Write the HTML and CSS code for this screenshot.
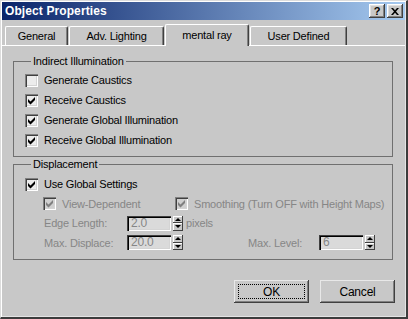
FILE: index.html
```html
<!DOCTYPE html>
<html>
<head>
<meta charset="utf-8">
<link rel="stylesheet" href="styles.css">
</head>
<body>
<div class="window">
  <div class="titlebar">
    <span class="title">Object Properties</span>
    <div class="tbtns">
      <span class="tbtn help">?</span>
      <span class="tbtn close"><svg width="8" height="7" viewBox="0 0 8 7"><path d="M0 0h2l2 2.3L6 0h2L5 3.5 8 7H6L4 4.7 2 7H0l3-3.5z" fill="#000"/></svg></span>
    </div>
  </div>
  <div class="tabs">
    <div class="tab tab-general">General</div>
    <div class="tab tab-adv">Adv. Lighting</div>
    <div class="tab tab-mr sel">mental ray</div>
    <div class="tab tab-user">User Defined</div>
  </div>
  <div class="panel">
    <fieldset class="group g1">
      <legend>Indirect Illumination</legend>
      <div class="row"><span class="cb"></span><span class="lbl">Generate Caustics</span></div>
      <div class="row"><span class="cb"><svg class="chk" viewBox="0 0 13 13"><polygon points="3,5 5.5,7.5 10,3 10,6 5.5,10.5 3,8"/></svg></span><span class="lbl">Receive Caustics</span></div>
      <div class="row"><span class="cb"><svg class="chk" viewBox="0 0 13 13"><polygon points="3,5 5.5,7.5 10,3 10,6 5.5,10.5 3,8"/></svg></span><span class="lbl">Generate Global Illumination</span></div>
      <div class="row"><span class="cb"><svg class="chk" viewBox="0 0 13 13"><polygon points="3,5 5.5,7.5 10,3 10,6 5.5,10.5 3,8"/></svg></span><span class="lbl">Receive Global Illumination</span></div>
    </fieldset>
    <fieldset class="group g2">
      <legend>Displacement</legend>
      <div class="row r1"><span class="cb"><svg class="chk" viewBox="0 0 13 13"><polygon points="3,5 5.5,7.5 10,3 10,6 5.5,10.5 3,8"/></svg></span><span class="lbl">Use Global Settings</span></div>
      <div class="row r2 sub">
        <div class="vd"><span class="cb dis"><svg class="chk" viewBox="0 0 13 13"><polygon points="3,5 5.5,7.5 10,3 10,6 5.5,10.5 3,8"/></svg></span><span class="lbl">View-Dependent</span></div>
        <span class="cb dis"><svg class="chk" viewBox="0 0 13 13"><polygon points="3,5 5.5,7.5 10,3 10,6 5.5,10.5 3,8"/></svg></span><span class="lbl">Smoothing (Turn OFF with Height Maps)</span>
      </div>
      <div class="row r3 sub2">
        <span class="flabel">Edge Length:</span>
        <span class="field">2.0</span>
        <span class="spin"><span class="up"></span><span class="dn"></span></span>
        <span class="unit">pixels</span>
      </div>
      <div class="row r4 sub2">
        <span class="flabel">Max. Displace:</span>
        <span class="field">20.0</span>
        <span class="spin"><span class="up"></span><span class="dn"></span></span>
        <span class="flabel ml">Max. Level:</span>
        <span class="field">6</span>
        <span class="spin"><span class="up"></span><span class="dn"></span></span>
      </div>
    </fieldset>
  </div>
  <div class="buttons">
    <div class="btn default"><span class="focus">OK</span></div>
    <div class="btn">Cancel</div>
  </div>
</div>
</body>
</html>
```

FILE: styles.css
```css
* { box-sizing: border-box; }
html, body { margin: 0; padding: 0; }
body {
  width: 408px;
  height: 319px;
  overflow: hidden;
  background: #c8c8c8;
  font-family: "Liberation Sans", Arial, sans-serif;
  font-size: 11px;
  letter-spacing: -0.2px;
  color: #000;
}
.window {
  width: 408px;
  height: 319px;
  background: #c8c8c8;
  border-style: solid;
  border-width: 1px 2px 2px 1px;
  border-color: #dcdcdc #3c3c3c #3c3c3c #dcdcdc;
  box-shadow: inset 1px 1px #ffffff, inset -1px -1px #e4e4e4;
  padding: 1px;
  display: flex;
  flex-direction: column;
}
.titlebar {
  height: 18px;
  flex: none;
  background: linear-gradient(to right, #0a246a, #a6caf0);
  display: flex;
  align-items: center;
  justify-content: space-between;
  padding: 0 2px 0 3px;
}
.title {
  color: #fff;
  font-weight: bold;
  font-size: 12px;
  letter-spacing: 0.1px;
}
.tbtns { display: flex; gap: 2px; }
.tbtn {
  width: 16px;
  height: 14px;
  background: #c8c8c8;
  box-shadow: inset -1px -1px #404040, inset 1px 1px #ffffff, inset -2px -2px #808080, inset 2px 2px #e0e0e0;
  display: flex;
  align-items: center;
  justify-content: center;
  font-weight: bold;
  font-size: 11px;
  line-height: 14px;
}
.tbtn.close svg { display: block; }

.tabs {
  flex: none;
  height: 26px;
  display: flex;
  align-items: flex-end;
  padding-left: 3px;
  border-bottom: 1px solid #fff;
}
.tab {
  height: 19px;
  border-top: 1px solid #fff;
  border-left: 1px solid #fff;
  border-right: 1px solid #404040;
  border-radius: 2px 2px 0 0;
  box-shadow: inset -1px 0 #808080;
  display: flex;
  align-items: center;
  justify-content: center;
  padding-bottom: 1px;
}
.tab-general { width: 63px; }
.tab-adv { width: 95px; margin-left: 1px; }
.tab-mr { width: 84px; margin-left: 1px; }
.tab-user { width: 97px; margin-left: 1px; }
.tab.sel {
  height: 22px;
  margin-bottom: -1px;
  background: #c8c8c8;
  position: relative;
  z-index: 1;
  padding-bottom: 2px;
}

.panel {
  flex: none;
  padding-left: 11px;
}
.group {
  width: 380px;
  margin: 0;
  border: 1px solid #707070;
  padding: 2px 0 6px 11px;
  min-width: 0;
}
.group legend {
  padding: 0 2px;
  margin-left: 6px;
  line-height: 13px;
}
.g1 { margin-top: 9px; }
.g2 { margin-top: 1px; padding-top: 3px; padding-bottom: 7px; }

.row {
  display: flex;
  align-items: center;
  height: 20px;
}
.r2 { height: 19px; }
.r4 { height: 19px; }
.cb {
  width: 13px;
  height: 13px;
  flex: none;
  background: #ececec;
  box-shadow: inset 1px 1px #808080, inset 2px 2px #404040, inset -1px -1px #ffffff, inset -2px -2px #d4d4d4;
  margin-right: 6px;
}
.cb .chk { display: block; width: 13px; height: 13px; fill: #000; }
.cb.dis { background: #d0d0d0; }
.cb.dis .chk { fill: #808080; }
.sub { padding-left: 18px; color: #868686; }
.sub .lbl { color: #868686; }
.vd { width: 132px; display: flex; align-items: center; }
.sub2 { padding-left: 19px; color: #868686; }
.flabel { width: 83px; flex: none; }
.flabel.ml { width: 71px; margin-left: 65px; }
.field {
  width: 44px;
  height: 15px;
  flex: none;
  background: #dadada;
  box-shadow: inset 1px 1px #404040, inset 2px 2px #000000, inset -1px -1px #ffffff, inset -2px -2px #d4d4d4;
  padding: 0 0 0 4px;
  line-height: 15px;
  font-size: 12px;
  color: #868686;
}
.spin {
  width: 10px;
  height: 15px;
  flex: none;
  margin-left: 2px;
  display: flex;
  flex-direction: column;
}
.spin span {
  flex: 1;
  background: #c8c8c8;
  box-shadow: inset -1px -1px #404040, inset 1px 1px #ffffff;
  display: flex;
  align-items: center;
  justify-content: center;
}
.spin .up::before {
  content: "";
  border-left: 3px solid transparent;
  border-right: 3px solid transparent;
  border-bottom: 3px solid #000;
  margin-right: 1px;
}
.spin .dn::before {
  content: "";
  border-left: 3px solid transparent;
  border-right: 3px solid transparent;
  border-top: 3px solid #000;
  margin-right: 1px;
}
.unit { margin-left: 3px; }

.buttons {
  flex: none;
  display: flex;
  justify-content: flex-end;
  gap: 11px;
  margin-top: 20px;
  padding-right: 10px;
}
.btn {
  width: 75px;
  height: 23px;
  background: #c8c8c8;
  box-shadow: inset -1px -1px #404040, inset 1px 1px #e8e8e8, inset -2px -2px #808080;
  display: flex;
  align-items: center;
  justify-content: center;
  font-size: 12px;
  padding: 4px;
}
.btn .focus {
  width: 100%;
  height: 100%;
  border: 1px dotted #000;
  display: flex;
  align-items: center;
  justify-content: center;
}
```
